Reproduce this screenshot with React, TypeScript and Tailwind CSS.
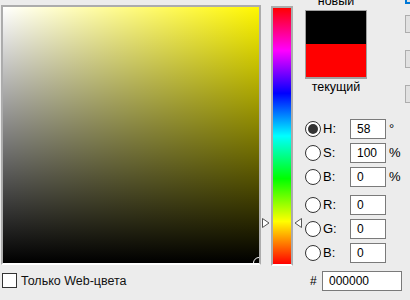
import React from "react";

const font = { fontFamily: '"Liberation Sans", Arial, sans-serif' };

const Radio = ({ checked }: { checked?: boolean }) => (
    <div className="w-[16px] h-[16px] rounded-full border border-[#333] bg-white flex items-center justify-center shrink-0">
        {checked && <div className="w-[10px] h-[10px] rounded-full bg-[#333]" />}
    </div>
);

const Row = ({ label, value, unit, checked }: { label: string; value: string; unit?: string; checked?: boolean }) => (
    <div className="flex items-center h-[20px]">
        <Radio checked={checked} />
        <span className="ml-[2px] w-[27px] text-[13px] leading-[14px] text-black">{label}</span>
        <div className="w-[36px] h-[20px] border border-[#7a7a7a] bg-white pl-[6px] text-[12px] leading-[18px] text-black">{value}</div>
        {unit && <span className="ml-[3px] text-[13px] leading-[14px] text-black">{unit}</span>}
    </div>
);

const Arrow = ({ dir }: { dir: "right" | "left" }) => (
    <svg width="8" height="10" viewBox="0 0 8 10" className="block">
        {dir === "right" ? (
            <polygon points="0.5,0.5 7,5 0.5,9.5" fill="#fff" stroke="#555" strokeWidth="1" />
        ) : (
            <polygon points="7.5,0.5 1,5 7.5,9.5" fill="#fff" stroke="#555" strokeWidth="1" />
        )}
    </svg>
);

export default function App() {
    return (
        <div className="w-[410px] h-[300px] bg-[#ececec] overflow-hidden flex items-start" style={font}>

            {/* colour field */}
            <div className="ml-[1px] mt-[5px] flex flex-col shrink-0">
                <div className="border-2 border-[#acacac] border-b-white">
                    <div
                        className="relative w-[256px] h-[256px] overflow-hidden"
                        style={{ background: "linear-gradient(to top, #000, rgba(0,0,0,0)), linear-gradient(to right, #fff, rgb(255,247,0))" }}
                    >
                        <div className="absolute -right-[6px] -bottom-[6px] w-[12px] h-[12px] rounded-full border border-white" />
                    </div>
                </div>
                <div className="flex items-center mt-[8px] ml-[1px]">
                    <div className="w-[15px] h-[15px] border border-[#333] bg-white" />
                    <span className="ml-[4px] text-[12.5px] leading-[14px] text-[#111]">Только Web-цвета</span>
                </div>
            </div>

            {/* hue bar */}
            <div className="relative ml-[10px] mt-[6px] shrink-0">
                <div className="border-2 border-[#acacac] border-b-white">
                    <div
                        className="w-[18px] h-[256px]"
                        style={{ background: "linear-gradient(to bottom, #f00 0%, #f0f 16.67%, #00f 33.33%, #0ff 50%, #0f0 66.67%, #ff0 83.33%, #f00 100%)" }}
                    />
                </div>
                <div className="absolute left-[-9px] top-[212px]"><Arrow dir="right" /></div>
                <div className="absolute left-[23px] top-[212px]"><Arrow dir="left" /></div>
            </div>

            {/* values */}
            <div className="ml-[12px] mt-[-6px] w-[97px] flex flex-col shrink-0">
                <div className="w-[62px] text-center text-[12.5px] leading-[14px] text-black">новый</div>
                <div className="mt-[2px] w-[62px] border border-[#a0a0a0] border-b-2">
                    <div className="h-[33px] bg-black" />
                    <div className="h-[33px] bg-[#ff0000]" />
                </div>
                <div className="mt-[1px] w-[62px] text-center text-[12.5px] leading-[14px] text-black">текущий</div>

                <div className="mt-[25px] flex flex-col gap-[4px]">
                    <Row label="H:" value="58" unit="°" checked />
                    <Row label="S:" value="100" unit="%" />
                    <Row label="B:" value="0" unit="%" />
                </div>
                <div className="mt-[8px] flex flex-col gap-[4px]">
                    <Row label="R:" value="0" />
                    <Row label="G:" value="0" />
                    <Row label="B:" value="0" />
                </div>
                <div className="mt-[8px] flex items-center h-[20px]">
                    <span className="w-[17px] pl-[5px] text-[12px] leading-[14px] text-black">#</span>
                    <div className="w-[80px] h-[20px] border border-[#7a7a7a] bg-white pl-[6px] text-[12px] leading-[18px] text-black">000000</div>
                </div>
            </div>

            {/* buttons (cut off) */}
            <div className="ml-[3px] mt-[-20px] flex flex-col shrink-0">
                <div className="w-[80px] h-[24px] border-2 border-[#0078d7] bg-[#e1e1e1]" />
                <div className="mt-[11px] w-[80px] h-[18px] border border-[#adadad] bg-[#e1e1e1]" />
                <div className="mt-[17px] w-[80px] h-[18px] border border-[#adadad] bg-[#e1e1e1]" />
                <div className="mt-[17px] w-[80px] h-[18px] border border-[#adadad] bg-[#e1e1e1]" />
            </div>
        </div>
    );
}
